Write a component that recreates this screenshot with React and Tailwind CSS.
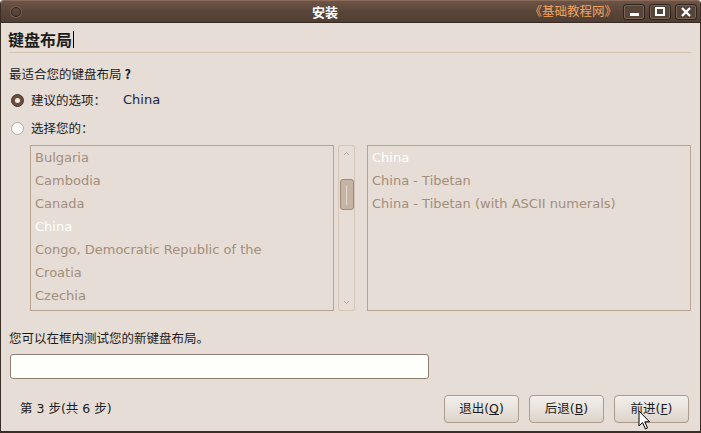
import React from "react";

const font = { fontFamily: '"DejaVu Sans", "Noto Sans CJK SC", sans-serif' };
const cjk = { fontFamily: '"Noto Sans CJK SC", "DejaVu Sans", sans-serif' };

function WinBtn({ children }) {
  return (
    <div className="w-[22px] h-[16px] rounded-[3px] border border-[#2e241f] bg-[#574539] shadow-[inset_0_0_0_1px_#7a6456] flex items-center justify-center">
      {children}
    </div>
  );
}

function Button({ label, k }) {
  return (
    <div className="w-[75px] h-[28px] rounded-[4px] border border-[#ab9b8c] bg-gradient-to-b from-[#f3efeb] via-[#e9e2dc] to-[#ddd3ca] flex items-center justify-center text-[12.5px] text-[#1a1a1a]">
      <span>
        <span style={cjk}>{label}</span>(<span className="underline">{k}</span>)
      </span>
    </div>
  );
}

function Radio({ checked }) {
  if (checked) {
    return (
      <div className="w-[13px] h-[13px] rounded-full bg-[#6a4d3d] border border-[#4a3428] flex items-center justify-center">
        <div className="w-[5px] h-[5px] rounded-full bg-[#f4ede6]" />
      </div>
    );
  }
  return <div className="w-[13px] h-[13px] rounded-full bg-[#fbf9f7] border border-[#b9aa9c]" />;
}

const countries = [
  "Bulgaria",
  "Cambodia",
  "Canada",
  "China",
  "Congo, Democratic Republic of the",
  "Croatia",
  "Czechia",
];
const variants = ["China", "China - Tibetan", "China - Tibetan (with ASCII numerals)"];

export default function App() {
  return (
    <div
      className="relative w-[701px] h-[433px] flex flex-col bg-[#e6ddd6] border-x border-b-2 border-[#3b2e27] rounded-t-[4px] overflow-hidden"
      style={font}
    >
      {/* title bar */}
      <div className="h-[23px] flex items-center bg-gradient-to-b from-[#6e5446] via-[#594639] to-[#4f3e33] border-t border-[#8a6a58] border-b border-b-[#362a23] shrink-0">
        <div className="ml-[10px] w-[10px] h-[10px] rounded-full border border-[#2f241e] shadow-[0_0_0_1px_#7b6456]" />
        <div className="ml-[291px] text-[13px] font-bold text-white leading-none" style={cjk}>安装</div>
        <div className="ml-auto mr-[6px] text-[12.5px] text-[#f4a460] leading-none" style={cjk}>《基础教程网》</div>
        <div className="flex gap-[4px] mr-[3px]">
          <WinBtn>
            <div className="w-[9px] h-[3px] bg-white mt-[6px]" />
          </WinBtn>
          <WinBtn>
            <div className="w-[10px] h-[9px] border-2 border-white" />
          </WinBtn>
          <WinBtn>
            <svg width="10" height="10" viewBox="0 0 10 10">
              <path d="M1 1 L9 9 M9 1 L1 9" stroke="white" strokeWidth="2.4" />
            </svg>
          </WinBtn>
        </div>
      </div>

      {/* body */}
      <div className="flex-1 flex flex-col pl-[7px] pr-[9px] text-[#1c1c1c]">
        <div className="mt-[6px] h-[20px] flex items-center">
          <span className="text-[16px] font-bold leading-none" style={cjk}>键盘布局</span>
          <div className="ml-[1px] w-px h-[17px] bg-black" />
        </div>
        <div className="mt-[3px] ml-[1px] h-px bg-[#d6c4b4]" />

        <div className="mt-[12px] h-[18px] flex items-center text-[12.5px] pl-[1px]" style={cjk}>最适合您的键盘布局<span className="ml-[3px] font-bold">?</span></div>

        <div className="mt-[8px] h-[18px] flex items-center text-[12.5px] pl-[3px]">
          <Radio checked />
          <span className="ml-[7px]" style={cjk}>建议的选项：</span>
          <span className="ml-[17px] text-[13px] text-[#23233f]">China</span>
        </div>
        <div className="mt-[10px] h-[18px] flex items-center text-[12.5px] pl-[3px]">
          <Radio />
          <span className="ml-[7px]" style={cjk}>选择您的：</span>
        </div>

        <div className="mt-[8px] ml-[22px] flex h-[166px]">
          <div className="w-[304px] h-full border border-[#b9a391] pl-[4px] text-[13px] text-[#a38d7b] leading-[23px]">
            {countries.map((c) => (
              <div key={c} className={c === "China" ? "text-white" : ""}>
                {c}
              </div>
            ))}
          </div>
          <div className="ml-[4px] w-[17px] h-full border border-[#d5c6b8] rounded-[2px] flex flex-col items-center relative">
            <svg className="mt-[5px]" width="7" height="5" viewBox="0 0 7 5">
              <path d="M1 4 L3.5 1.5 L6 4" stroke="#b3a292" strokeWidth="1" fill="none" />
            </svg>
            <div className="mt-[23px] w-[14px] h-[31px] rounded-[3px] border border-[#9e8a78] bg-[#c5b3a3] flex items-center justify-center">
              <div className="w-px h-[20px] bg-[#e4d8cd] rounded-full" />
            </div>
            <svg className="mt-auto mb-[5px]" width="7" height="5" viewBox="0 0 7 5">
              <path d="M1 1 L3.5 3.5 L6 1" stroke="#b3a292" strokeWidth="1" fill="none" />
            </svg>
          </div>
          <div className="ml-[12px] flex-1 h-full border border-[#b9a391] pl-[4px] text-[13px] text-[#a38d7b] leading-[23px]">
            {variants.map((c, i) => (
              <div key={c} className={i === 0 ? "text-white" : ""}>
                {c}
              </div>
            ))}
          </div>
        </div>

        <div className="mt-[18px] h-[18px] flex items-center text-[12.5px] pl-[1px]" style={cjk}>您可以在框内测试您的新键盘布局。</div>
        <div className="mt-[7px] ml-[2px] w-[419px] h-[25px] rounded-[3px] border border-[#8e7e72] bg-[#fffffb]" />

        <div className="mt-[16px] flex items-center">
          <span className="ml-[12px] text-[12.5px]">
            <span style={cjk}>第</span> 3 <span style={cjk}>步</span>(<span style={cjk}>共</span> 6 <span style={cjk}>步</span>)
          </span>
          <div className="ml-auto flex gap-[10px] mr-[2px]">
            <Button label="退出" k="Q" />
            <Button label="后退" k="B" />
            <Button label="前进" k="F" />
          </div>
        </div>
      </div>

      {/* mouse cursor */}
      <svg className="absolute left-[637px] top-[410px]" width="14" height="21" viewBox="0 0 14 21">
        <path d="M1 1 L1 16 L4.5 12.5 L7.5 19 L9.5 18 L6.8 11.8 L11.5 11.8 Z" fill="white" stroke="black" strokeWidth="1" strokeLinejoin="round" />
      </svg>
    </div>
  );
}
